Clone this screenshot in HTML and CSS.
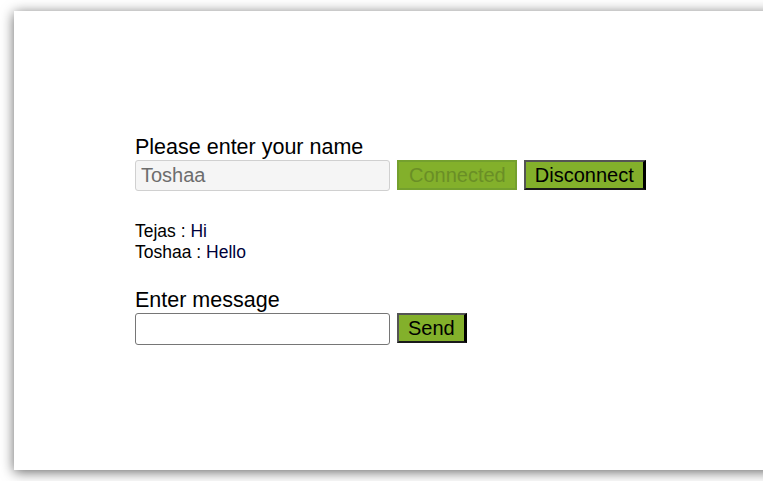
FILE: index.html
```html
<!DOCTYPE html>
<html>
<head>
<meta charset="utf-8">
<link rel="stylesheet" href="styles.css">
</head>
<body>
<div class="card">
  <div class="content">
    <label class="label" for="name">Please enter your name</label>
    <div class="row">
      <input id="name" class="field field-disabled" type="text" value="Toshaa" disabled>
      <button class="btn btn-disabled" disabled>Connected</button>
      <button class="btn">Disconnect</button>
    </div>
    <div class="messages">
      <div class="msg">Tejas : <span class="msg-text">Hi</span></div>
      <div class="msg">Toshaa : <span class="msg-text">Hello</span></div>
    </div>
    <label class="label label-msg" for="msg">Enter message</label>
    <div class="row">
      <input id="msg" class="field field-msg" type="text">
      <button class="btn">Send</button>
    </div>
  </div>
</div>
</body>
</html>
```
FILE: styles.css
```css
html, body {
  margin: 0;
  padding: 0;
  background: #ffffff;
  overflow: hidden;
  height: 481px;
}
body {
  font-family: "Liberation Sans", Arial, sans-serif;
  color: #000;
}
.card {
  margin: 11px -30px 0 14px;
  height: 459px;
  background: #fff;
  box-shadow: 0 2px 12px rgba(0, 0, 0, 0.6);
}
.content {
  padding: 124px 0 0 121px;
  display: flex;
  flex-direction: column;
  align-items: flex-start;
}
.label {
  font-size: 21.5px;
  line-height: 25px;
  display: block;
}
.label-msg {
  margin-top: 25px;
}
.row {
  display: flex;
  align-items: flex-start;
  gap: 7px;
}
.field {
  box-sizing: border-box;
  width: 255px;
  height: 31px;
  margin: 0;
  padding: 0 5px;
  font-family: "Liberation Sans", Arial, sans-serif;
  font-size: 20px;
  border-radius: 3px;
  outline: none;
}
.field-disabled {
  background: #f5f5f5;
  border: 1px solid #d0d0d0;
  color: #6d6d6d;
}
.field-msg {
  height: 32px;
  background: #fff;
  border: 1px solid #767676;
}
.btn {
  box-sizing: border-box;
  height: 30px;
  margin: 0;
  padding: 0 9px 0 9px;
  font-family: "Liberation Sans", Arial, sans-serif;
  font-size: 20px;
  line-height: 24px;
  color: #000;
  background: #83b02b;
  border-width: 2px 3px 2px 2px;
  border-style: solid;
  border-color: #545454 #000 #1a1a1a #545454;
}
.btn-disabled {
  color: #6a8e26;
  border: 2px solid #74a02e;
  padding: 0 9px 0 10px;
}
.messages {
  margin-top: 30px;
  font-size: 17.5px;
  line-height: 21px;
}
.msg-text {
  color: #00003a;
}
```
